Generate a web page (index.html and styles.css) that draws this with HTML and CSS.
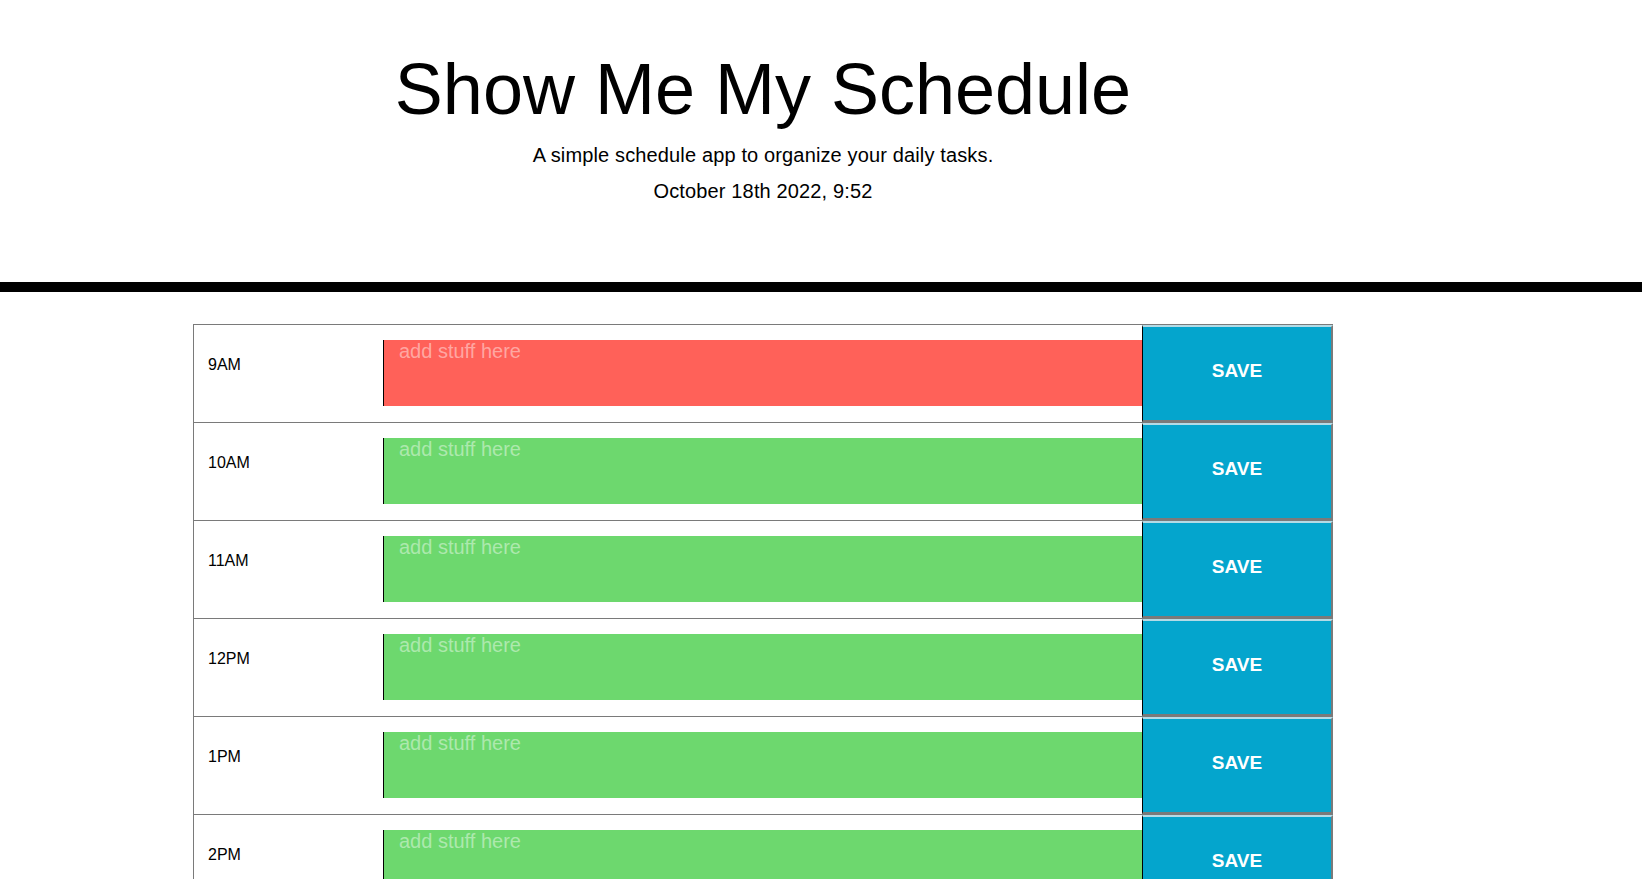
FILE: index.html
```html
<!DOCTYPE html>
<html lang="en">
<head>
<meta charset="utf-8">
<title>Show Me My Schedule</title>
<link rel="stylesheet" href="styles.css">
</head>
<body>
<header class="jumbotron">
  <div class="page">
    <h1 class="title">Show Me My Schedule</h1>
    <p class="lead lead-first">A simple schedule app to organize your daily tasks.</p>
    <p class="lead">October 18th 2022, 9:52</p>
  </div>
</header>
<main class="page">
  <div class="container">
    <div class="row">
      <div class="hour">9AM</div>
      <textarea class="description present" placeholder="add stuff here"></textarea>
      <button class="saveBtn">SAVE</button>
    </div>
    <div class="row">
      <div class="hour">10AM</div>
      <textarea class="description future" placeholder="add stuff here"></textarea>
      <button class="saveBtn">SAVE</button>
    </div>
    <div class="row">
      <div class="hour">11AM</div>
      <textarea class="description future" placeholder="add stuff here"></textarea>
      <button class="saveBtn">SAVE</button>
    </div>
    <div class="row">
      <div class="hour">12PM</div>
      <textarea class="description future" placeholder="add stuff here"></textarea>
      <button class="saveBtn">SAVE</button>
    </div>
    <div class="row">
      <div class="hour">1PM</div>
      <textarea class="description future" placeholder="add stuff here"></textarea>
      <button class="saveBtn">SAVE</button>
    </div>
    <div class="row">
      <div class="hour">2PM</div>
      <textarea class="description future" placeholder="add stuff here"></textarea>
      <button class="saveBtn">SAVE</button>
    </div>
    <div class="row">
      <div class="hour">3PM</div>
      <textarea class="description future" placeholder="add stuff here"></textarea>
      <button class="saveBtn">SAVE</button>
    </div>
    <div class="row">
      <div class="hour">4PM</div>
      <textarea class="description future" placeholder="add stuff here"></textarea>
      <button class="saveBtn">SAVE</button>
    </div>
    <div class="row">
      <div class="hour">5PM</div>
      <textarea class="description future" placeholder="add stuff here"></textarea>
      <button class="saveBtn">SAVE</button>
    </div>
  </div>
</main>
</body>
</html>
```
FILE: styles.css
```css
html, body {
  margin: 0;
  padding: 0;
}
body {
  font-family: "Liberation Sans", Arial, Helvetica, sans-serif;
  color: #000;
  background: #fff;
}
.page {
  width: 1526px;
}
.jumbotron {
  border-bottom: 10px solid #000;
  padding: 46px 0 73px;
  text-align: center;
}
.title {
  margin: 0;
  font-size: 72px;
  font-weight: 300;
  line-height: 1.2;
}
.lead {
  margin: 0;
  font-size: 20px;
  font-weight: 300;
  line-height: 36px;
  letter-spacing: 0.14px;
}
.lead-first {
  margin-top: 5px;
}
.container {
  width: 1140px;
  margin: 32px auto 0;
  padding-bottom: 40px;
}
.row {
  display: grid;
  grid-template-columns: 189px 759px 1fr;
  height: 98px;
  box-sizing: border-box;
  border-top: 1px solid #7a7a7a;
  border-left: 1px solid #7a7a7a;
}
.hour {
  padding: 28px 0 0 14px;
  font-size: 16px;
  line-height: 24px;
}
.description {
  align-self: start;
  margin: 15px 0 0;
  height: 66px;
  box-sizing: border-box;
  border: none;
  border-left: 1px solid #000;
  padding: 0 15px;
  font-family: "Liberation Sans", Arial, sans-serif;
  font-size: 20px;
  line-height: 23px;
  color: #000;
  resize: none;
  outline: none;
}
.description::placeholder {
  color: rgba(255, 255, 255, 0.45);
}
.present {
  background: #ff6159;
}
.future {
  background: #6dd86e;
}
.saveBtn {
  margin: 0;
  box-sizing: border-box;
  border-left: 1px solid #000;
  border-top: 2px solid #b4dbe6;
  border-right: 2px solid #7a7a7a;
  border-bottom: 2px solid #7a7a7a;
  background: #04a5cd;
  color: #fff;
  font-family: "Liberation Sans", Arial, sans-serif;
  font-size: 19px;
  font-weight: bold;
  padding: 0 0 5px;
}
```
